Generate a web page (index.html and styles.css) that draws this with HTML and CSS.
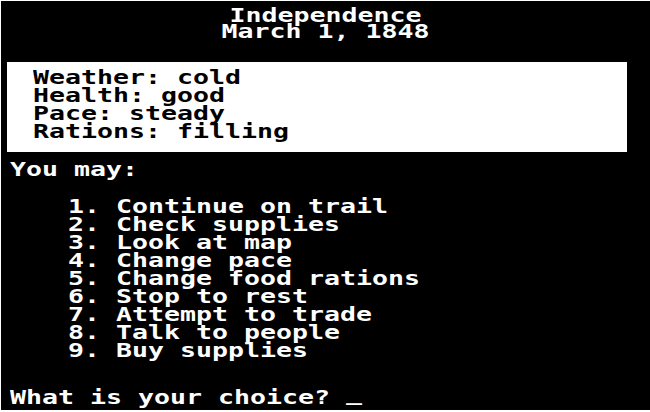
FILE: index.html
```html
<!DOCTYPE html>
<html lang="en">
<head>
<meta charset="utf-8">
<title>Independence</title>
<link rel="stylesheet" href="styles.css">
</head>
<body>
<main class="screen">
  <header class="title">
    <div class="line">Independence</div>
    <div class="line">March 1, 1848</div>
  </header>
  <section class="status">
    <div class="line">Weather: cold</div>
    <div class="line">Health: good</div>
    <div class="line">Pace: steady</div>
    <div class="line">Rations: filling</div>
  </section>
  <p class="line prompt">You may:</p>
  <ol class="menu">
    <li class="line">1. Continue on trail</li>
    <li class="line">2. Check supplies</li>
    <li class="line">3. Look at map</li>
    <li class="line">4. Change pace</li>
    <li class="line">5. Change food rations</li>
    <li class="line">6. Stop to rest</li>
    <li class="line">7. Attempt to trade</li>
    <li class="line">8. Talk to people</li>
    <li class="line">9. Buy supplies</li>
  </ol>
  <div class="line ask">What is your choice? <span class="cursor">_</span></div>
</main>
</body>
</html>
```
FILE: styles.css
```css
html, body {
  margin: 0;
  padding: 0;
  background: #fff;
}

body {
  width: 650px;
  height: 412px;
  overflow: hidden;
}

.screen {
  display: block;
  margin: 1px 0 0 1px;
  width: 649px;
  height: 409px;
  box-sizing: border-box;
  padding-top: 6px;
  background: #000;
  color: #fff;
  font-family: "DejaVu Sans Mono", "Liberation Mono", monospace;
  font-weight: bold;
  font-size: 19px;
  line-height: 18px;
  overflow: hidden;
}

.line {
  white-space: pre;
  transform: scaleX(1.3987);
  transform-origin: left center;
}

.title {
  line-height: 16px;
  text-align: center;
}

.title .line {
  transform-origin: center center;
}

.status {
  margin: 23px 0 0 6px;
  width: 620px;
  height: 90px;
  box-sizing: border-box;
  padding: 6px 0 0 26px;
  background: #fff;
  color: #000;
}

.prompt {
  margin: 8px 0 0 9px;
}

.menu {
  list-style: none;
  margin: 19px 0 0 67px;
  padding: 0;
}

.ask {
  height: 18px;
  margin: 29px 0 0 9px;
}

.cursor {
  position: relative;
  top: -4px;
}
```
